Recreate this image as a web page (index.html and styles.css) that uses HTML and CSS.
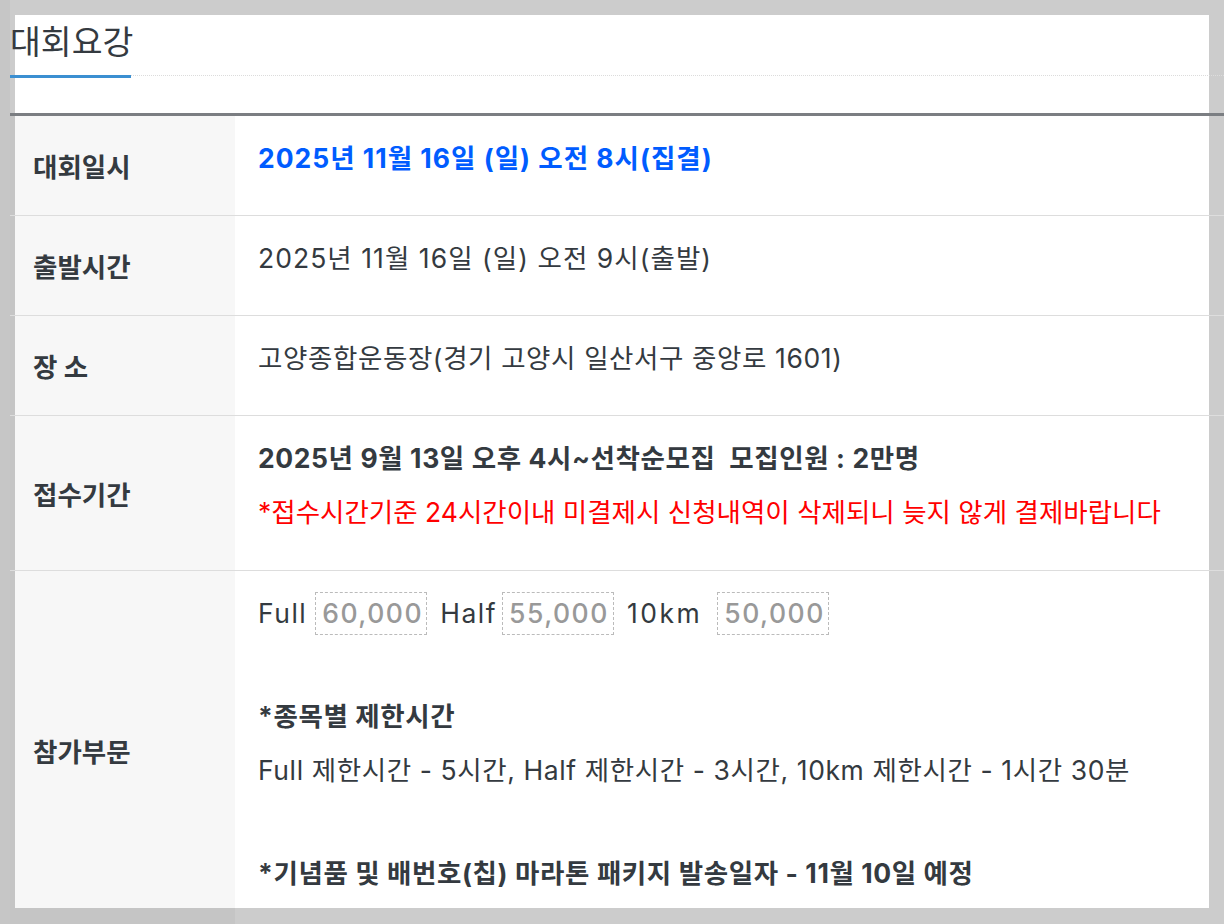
FILE: index.html
```html
<!DOCTYPE html>
<html lang="ko">
<head>
<meta charset="utf-8">
<title>대회요강</title>
<link rel="stylesheet" href="styles.css">
</head>
<body>
<div class="strip"></div>
<div class="stage">
  <div class="panel">
    <div class="content">
      <h2 class="title"><span class="title-text">대회요강</span></h2>
      <table class="info">
        <tbody>
          <tr>
            <th>대회일시</th>
            <td><p class="em-blue">2025년 11월 16일 (일) 오전 8시(집결)</p></td>
          </tr>
          <tr>
            <th>출발시간</th>
            <td><p class="date">2025년 11월 16일 (일) 오전 9시(출발)</p></td>
          </tr>
          <tr>
            <th>장 소</th>
            <td><p>고양종합운동장(경기 고양시 일산서구 중앙로 1601)</p></td>
          </tr>
          <tr class="tall">
            <th>접수기간</th>
            <td>
              <p class="strong">2025년 9월 13일 오후 4시~선착순모집&nbsp;&nbsp;모집인원 : 2만명</p>
              <p class="warn">*접수시간기준 24시간이내 미결제시 신청내역이 삭제되니 늦지 않게 결제바랍니다</p>
            </td>
          </tr>
          <tr>
            <th>참가부문</th>
            <td>
              <p class="prices">
                <span class="course">Full</span><span class="price">60,000</span>
                <span class="course course-half">Half</span><span class="price">55,000</span>
                <span class="course course-wide">10km</span><span class="price">50,000</span>
              </p>
              <p class="spacer"></p>
              <p class="strong">*종목별 제한시간</p>
              <p>Full 제한시간 - 5시간, Half 제한시간 - 3시간, 10km 제한시간 - 1시간 30분</p>
              <p class="spacer"></p>
              <p class="strong">*기념품 및 배번호(칩) 마라톤 패키지 발송일자 - 11월 10일 예정</p>
            </td>
          </tr>
        </tbody>
      </table>
    </div>
  </div>
</div>
</body>
</html>
```

FILE: styles.css
```css
html, body {
  margin: 0;
  padding: 0;
  height: 924px;
  overflow: hidden;
}
body {
  background: #cccccc;
  display: flex;
  font-family: "Inter", "Noto Sans CJK KR", sans-serif;
  color: #343a40;
}
.strip {
  width: 10px;
  flex: none;
  background: #c6c6c6;
}
.stage {
  flex: 1;
  padding-top: 15px;
  min-width: 0;
}
.panel {
  margin-left: 5px;
  width: 1194px;
  height: 893px;
  background: #ffffff;
}
.content {
  margin-left: -5px;
  width: 1214px;
}
.title {
  margin: 0;
  display: flex;
  height: 60px;
  border-bottom: 1px dotted #dcdcdc;
  font-size: 33.5px;
  font-weight: 400;
  line-height: 34px;
  color: #343a40;
}
.title-text {
  display: block;
  padding-top: 10px;
  height: 50px;
  width: 121px;
  border-bottom: 3px solid #3b8fd1;
  margin-bottom: -3px;
  white-space: nowrap;
}
.info {
  margin-top: 37px;
  width: 1214px;
  border-collapse: collapse;
  border-top: 3px solid #7b7e82;
}
.info th {
  width: 202px;
  padding: 0 0 0 23px;
  text-align: left;
  vertical-align: middle;
  background: rgba(0, 0, 0, 0.03);
  font-size: 26.5px;
  font-weight: 700;
  color: #343a40;
  border-bottom: 1px solid #dddddd;
}
.info td {
  padding: 23px 0 22px 23px;
  vertical-align: top;
  border-bottom: 1px solid #dddddd;
  font-size: 26.5px;
  font-weight: 400;
  color: #343a40;
}
.info .tall td {
  padding-bottom: 23px;
}
.info p {
  margin: 0 0 16px;
  line-height: 38px;
  height: 38px;
  white-space: nowrap;
  letter-spacing: 0.6px;
}
.info p.spacer {
  height: 33px;
}
.info p.em-blue {
  color: #005cff;
  font-weight: 700;
  letter-spacing: 1px;
}
.info p.date {
  letter-spacing: 1.05px;
}
.strong {
  font-weight: 700;
}
.info p.warn {
  color: #ff0000;
  letter-spacing: 0;
}
.info p.prices {
  display: flex;
  align-items: center;
  letter-spacing: 1.5px;
}
.course {
  margin-right: 8px;
}
.course-half {
  margin-right: 5px;
}
.course-wide {
  letter-spacing: 2.5px;
  margin-right: 15px;
}
.price {
  display: inline-block;
  box-sizing: border-box;
  height: 43px;
  width: 112px;
  line-height: 41px;
  padding: 0 0 0 6px;
  border: 1px dashed #bbbbbb;
  color: #999999;
  font-weight: 500;
  margin-right: 13px;
}
```
